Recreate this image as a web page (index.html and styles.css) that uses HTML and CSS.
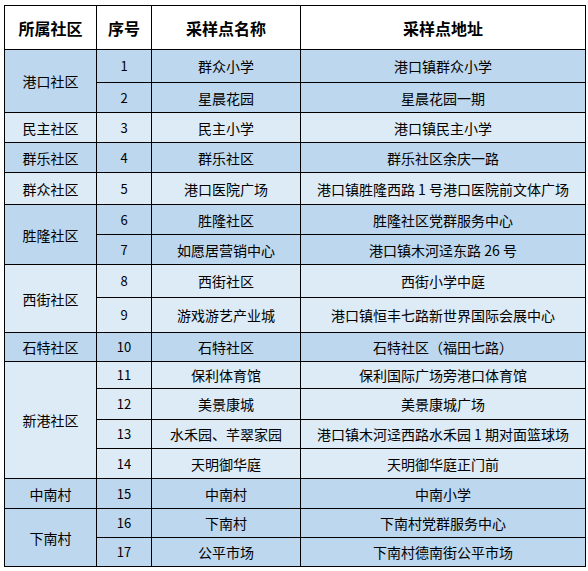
FILE: index.html
```html
<!DOCTYPE html>
<html lang="zh-CN">
<head>
<meta charset="utf-8">
<title>采样点</title>
<link rel="stylesheet" href="styles.css">
</head>
<body>
<table class="sites">
  <colgroup>
    <col class="c1"><col class="c2"><col class="c3"><col class="c4">
  </colgroup>
  <thead>
    <tr class="r44"><th>所属社区</th><th>序号</th><th>采样点名称</th><th>采样点地址</th></tr>
  </thead>
  <tbody>
    <tr class="r33 dark"><td rowspan="2">港口社区</td><td class="num">1</td><td>群众小学</td><td>港口镇群众小学</td></tr>
    <tr class="r30 dark"><td class="num">2</td><td>星晨花园</td><td>星晨花园一期</td></tr>
    <tr class="r30 light"><td>民主社区</td><td class="num">3</td><td>民主小学</td><td>港口镇民主小学</td></tr>
    <tr class="r30 dark"><td>群乐社区</td><td class="num">4</td><td>群乐社区</td><td>群乐社区余庆一路</td></tr>
    <tr class="r32 light"><td>群众社区</td><td class="num">5</td><td>港口医院广场</td><td>港口镇胜隆西路 1 号港口医院前文体广场</td></tr>
    <tr class="r30 dark"><td rowspan="2">胜隆社区</td><td class="num">6</td><td>胜隆社区</td><td>胜隆社区党群服务中心</td></tr>
    <tr class="r30 dark"><td class="num">7</td><td>如愿居营销中心</td><td>港口镇木河迳东路 26 号</td></tr>
    <tr class="r33 light"><td rowspan="2">西街社区</td><td class="num">8</td><td>西街社区</td><td>西街小学中庭</td></tr>
    <tr class="r35 light"><td class="num">9</td><td>游戏游艺产业城</td><td>港口镇恒丰七路新世界国际会展中心</td></tr>
    <tr class="r29 dark"><td>石特社区</td><td class="num">10</td><td>石特社区</td><td>石特社区（福田七路）</td></tr>
    <tr class="r27 light"><td rowspan="4">新港社区</td><td class="num">11</td><td>保利体育馆</td><td>保利国际广场旁港口体育馆</td></tr>
    <tr class="r31 light"><td class="num">12</td><td>美景康城</td><td>美景康城广场</td></tr>
    <tr class="r29 light"><td class="num">13</td><td>水禾园、芊翠家园</td><td>港口镇木河迳西路水禾园 1 期对面篮球场</td></tr>
    <tr class="r30 light"><td class="num">14</td><td>天明御华庭</td><td>天明御华庭正门前</td></tr>
    <tr class="r30 dark"><td>中南村</td><td class="num">15</td><td>中南村</td><td>中南小学</td></tr>
    <tr class="r29 dark"><td rowspan="2">下南村</td><td class="num">16</td><td>下南村</td><td>下南村党群服务中心</td></tr>
    <tr class="r29 dark"><td class="num">17</td><td>公平市场</td><td>下南村德南街公平市场</td></tr>
  </tbody>
</table>
</body>
</html>
```
FILE: styles.css
```css
html, body {
  margin: 0;
  padding: 0;
  background: #ffffff;
}
body {
  padding: 5px 0 0 4px;
  font-family: "Noto Sans CJK SC", "Liberation Sans", sans-serif;
  color: #000000;
}
.sites {
  border-collapse: collapse;
  table-layout: fixed;
  width: 581px;
}
.c1 { width: 92px; }
.c2 { width: 55px; }
.c3 { width: 149px; }
.c4 { width: 285px; }
.sites th,
.sites td {
  border: 1px solid #000000;
  padding: 0;
  text-align: center;
  vertical-align: middle;
  font-size: 14px;
  line-height: 16px;
  white-space: nowrap;
  overflow: hidden;
}
.sites th {
  font-size: 16px;
  font-weight: bold;
  background: #ffffff;
}
.sites td.num {
  font-size: 13px;
}
.dark td { background: #bdd7ee; }
.light td { background: #ddebf7; }
.r27 { height: 27px; }
.r29 { height: 29px; }
.r30 { height: 30px; }
.r31 { height: 31px; }
.r32 { height: 32px; }
.r33 { height: 33px; }
.r35 { height: 35px; }
.r44 { height: 44px; }
```
